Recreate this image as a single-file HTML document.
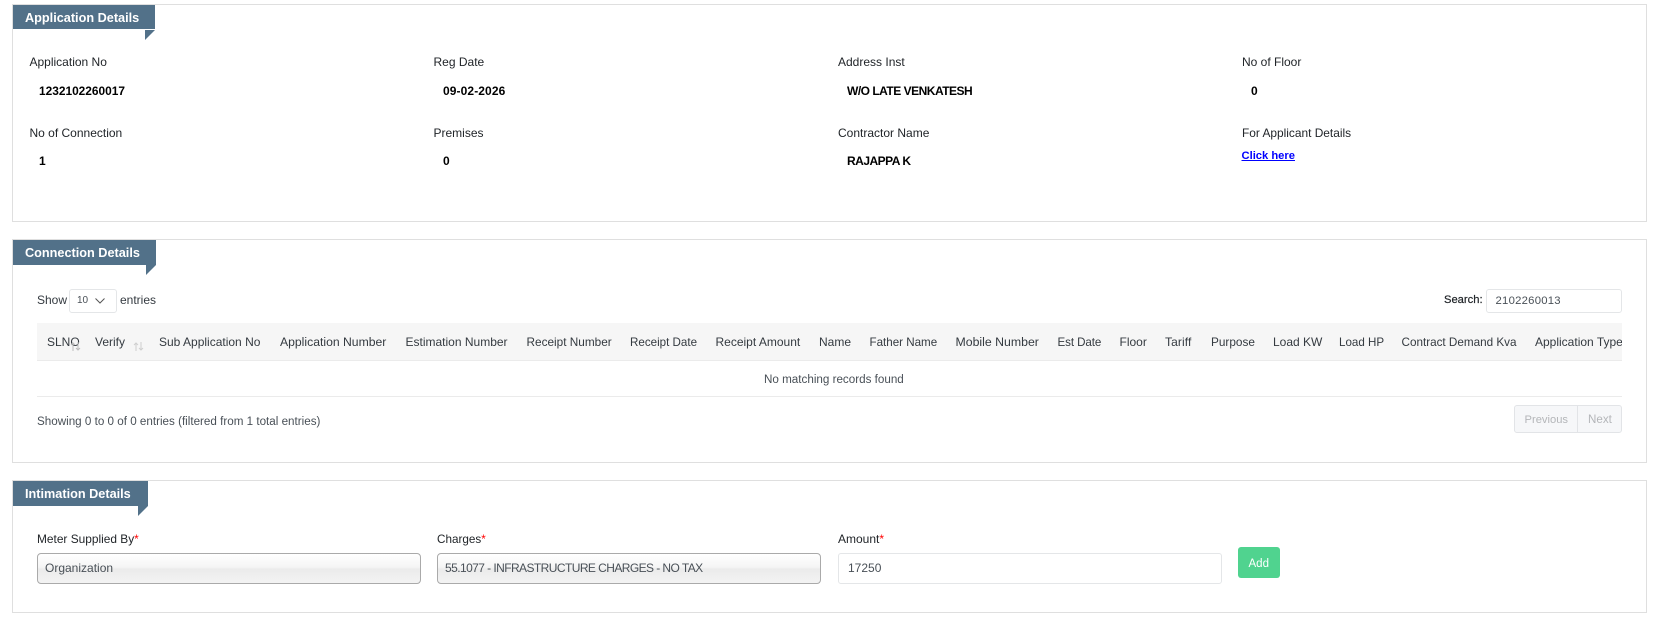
<!DOCTYPE html>
<html><head><meta charset="utf-8"><style>
html,body{margin:0;padding:0;background:#fff;}
body{position:relative;width:1657px;height:624px;overflow:hidden;font-family:"Liberation Sans",sans-serif;font-size:12px;color:#343a40;}
.t,.b,.p,.tab{position:absolute;box-sizing:border-box;}
.t{white-space:nowrap;line-height:16px;}
.p{border:1px solid #dfdfdf;left:12px;width:1635px;}
.tab{background:#527189;color:#fff;font-weight:bold;font-size:12.7px;line-height:26px;left:13px;padding-left:12px;white-space:nowrap;}
.l{color:#212529;}
.v{color:#000;font-weight:bold;}
.u{letter-spacing:-.5px;}
.n{font-size:11.6px;}
.sel{background:linear-gradient(#fff 0,#f5f5f5 45%,#ebebeb 52%,#f3f3f3 100%);border:1px solid #aaa;border-radius:4px;}
.inp{border:1px solid #e4e6e8;border-radius:3px;background:#fff;}
i{color:#f00;font-style:normal;}
</style></head><body>

<div class="p" style="top:4px;height:218px"></div>
<div class="p" style="top:239px;height:224px"></div>
<div class="p" style="top:480px;height:133px"></div>

<div class="tab" style="top:5px;width:142px;height:24px">Application Details</div>
<svg class="b" style="left:145px;top:30px" width="10" height="10"><path d="M0 0H10L0 10Z" fill="#527189"/></svg>
<div class="tab" style="top:240px;width:143px;height:25px">Connection Details</div>
<svg class="b" style="left:146px;top:265px" width="10" height="10"><path d="M0 0H10L0 10Z" fill="#527189"/></svg>
<div class="tab" style="top:481px;width:135px;height:25px">Intimation Details</div>
<svg class="b" style="left:138px;top:506px" width="10" height="10"><path d="M0 0H10L0 10Z" fill="#527189"/></svg>

<div class="t l" style="left:29.500px;top:54px">Application No</div>
<div class="t l" style="left:433.500px;top:54px">Reg Date</div>
<div class="t l" style="left:838px;top:54px">Address Inst</div>
<div class="t l" style="left:1242px;top:54px">No of Floor</div>
<div class="t v" style="left:39px;top:83px;font-size:11.900px">1232102260017</div>
<div class="t v" style="left:443px;top:83px;letter-spacing:.1px">09-02-2026</div>
<div class="t v u" style="left:847px;top:83px">W/O LATE VENKATESH</div>
<div class="t v" style="left:1251px;top:83px">0</div>
<div class="t l" style="left:29.500px;top:125px">No of Connection</div>
<div class="t l" style="left:433.500px;top:125px">Premises</div>
<div class="t l" style="left:838px;top:125px">Contractor Name</div>
<div class="t l" style="left:1242px;top:125px;font-size:11.900px">For Applicant Details</div>
<div class="t v" style="left:39px;top:153px">1</div>
<div class="t v" style="left:443px;top:153px">0</div>
<div class="t v u" style="left:847px;top:153px">RAJAPPA K</div>
<a class="t" href="#" style="left:1241.500px;top:148px;color:#00f;font-weight:bold;text-decoration:underline;font-size:11.200px">Click here</a>

<div class="t" style="left:37px;top:292px">Show</div>
<div class="b inp" style="left:69px;top:289px;width:48px;height:24px"></div>
<div class="t" style="left:77px;top:293px;font-size:10px;color:#495057">10</div>
<svg class="b" style="left:94px;top:297px" width="12" height="8"><path d="M1.500 1.500L6 6L10.500 1.500" fill="none" stroke="#555" stroke-width="1"/></svg>
<div class="t" style="left:120px;top:292px">entries</div>
<div class="t" style="left:1444px;top:292px;color:#212529;font-size:11.200px;-webkit-text-stroke:.2px #212529">Search:</div>
<div class="b inp" style="left:1486px;top:289px;width:136px;height:24px"></div>
<div class="t" style="left:1495.500px;top:293px;font-size:11.300px;letter-spacing:.25px;color:#495057">2102260013</div>

<div class="b" style="left:37px;top:323px;width:1585px;height:38px;background:#f6f6f6;border-bottom:1px solid #ebebeb"></div>
<div class="b" style="left:37px;top:323px;width:1585px;height:38px;overflow:hidden">
<div class="t" style="left:10px;top:11px">SLNO</div>
<svg class="b" style="left:33px;top:19px" width="11" height="9"><path d="M3 9V1M1 3L3 1L5 3M8 0V8M6 6L8 8L10 6" fill="none" stroke="#bdbdbd" stroke-width="1"/></svg>
<div class="t" style="left:58px;top:11px">Verify</div>
<svg class="b" style="left:96px;top:19px" width="11" height="9"><path d="M3 9V1M1 3L3 1L5 3M8 0V8M6 6L8 8L10 6" fill="none" stroke="#cfcfcf" stroke-width="1"/></svg>
<div class="t" style="left:122px;top:11px">Sub Application No</div>
<div class="t" style="left:243px;top:11px;font-size:12.200px">Application Number</div>
<div class="t" style="left:368.500px;top:11px">Estimation Number</div>
<div class="t" style="left:489.500px;top:11px;font-size:11.800px">Receipt Number</div>
<div class="t n" style="left:593px;top:12px">Receipt Date</div>
<div class="t" style="left:678.500px;top:11px">Receipt Amount</div>
<div class="t" style="left:782px;top:11px">Name</div>
<div class="t n" style="left:832.500px;top:12px">Father Name</div>
<div class="t" style="left:918.500px;top:11px;font-size:12.300px">Mobile Number</div>
<div class="t n" style="left:1020.500px;top:12px;letter-spacing:-.1px">Est Date</div>
<div class="t" style="left:1082.500px;top:11px">Floor</div>
<div class="t" style="left:1128px;top:11px;letter-spacing:.1px">Tariff</div>
<div class="t" style="left:1174px;top:11px;font-size:11.800px">Purpose</div>
<div class="t" style="left:1236px;top:11px">Load KW</div>
<div class="t n" style="left:1302px;top:12px">Load HP</div>
<div class="t" style="left:1364.500px;top:12px;font-size:11.700px">Contract Demand Kva</div>
<div class="t" style="left:1498px;top:11px">Application Type</div>
</div>

<div class="t" style="left:764px;top:372px;color:#495057;font-size:11.650px">No matching records found</div>
<div class="b" style="left:37px;top:396px;width:1585px;height:1px;background:#ebebeb"></div>
<div class="t" style="left:37px;top:414px;color:#495057;font-size:11.650px">Showing 0 to 0 of 0 entries (filtered from 1 total entries)</div>

<div class="b" style="left:1514px;top:405px;width:64px;height:28px;background:#f6f7f9;border:1px solid #e2e4e7;border-radius:3px 0 0 3px"></div>
<div class="b" style="left:1577px;top:405px;width:45px;height:28px;background:#f6f7f9;border:1px solid #e2e4e7;border-radius:0 3px 3px 0"></div>
<div class="t" style="left:1524.500px;top:412px;color:#b4b6b9;font-size:11.200px">Previous</div>
<div class="t" style="left:1588px;top:412px;color:#b4b6b9;font-size:11.600px">Next</div>

<div class="t l" style="left:37px;top:531px;font-size:11.900px">Meter Supplied By<i>*</i></div>
<div class="t l" style="left:437px;top:532px;font-size:11.700px">Charges<i>*</i></div>
<div class="t l" style="left:838px;top:531px">Amount<i>*</i></div>
<div class="b sel" style="left:37px;top:553px;width:384px;height:31px"></div>
<div class="t" style="left:45px;top:559.500px;color:#495057">Organization</div>
<div class="b sel" style="left:437px;top:553px;width:384px;height:31px"></div>
<div class="t" style="left:445px;top:559.500px;color:#495057;letter-spacing:-.57px">55.1077 - INFRASTRUCTURE CHARGES - NO TAX</div>
<div class="b inp" style="left:838px;top:553px;width:384px;height:31px"></div>
<div class="t" style="left:848px;top:560px;color:#495057">17250</div>
<div class="b" style="left:1238px;top:547px;width:42px;height:31px;background:#50d38f;border-radius:3px"></div>
<div class="t" style="left:1248.500px;top:556px;color:#fff;font-size:11.500px">Add</div>
</body></html>
